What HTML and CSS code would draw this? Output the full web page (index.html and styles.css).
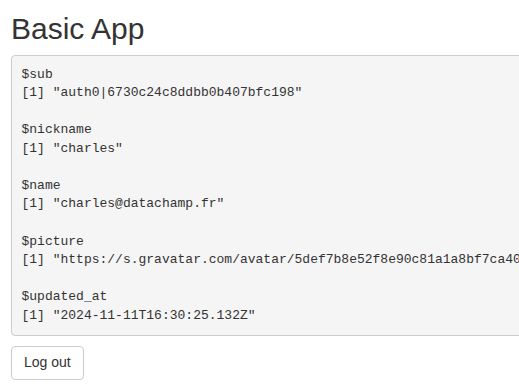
FILE: index.html
```html
<!DOCTYPE html>
<html>
<head>
<meta charset="utf-8">
<link rel="stylesheet" href="styles.css">
</head>
<body>
<div class="page">
  <h2 class="title">Basic App</h2>
  <pre class="output">$sub
[1] "auth0|6730c24c8ddbb0b407bfc198"

$nickname
[1] "charles"

$name
[1] "charles@datachamp.fr"

$picture
[1] "https://s.gravatar.com/avatar/5def7b8e52f8e90c81a1a8bf7ca40c07?s=480&amp;r=pg&amp;d=https%3A%2F%2Fcdn.auth0.com%2Favatars%2Fch.png"

$updated_at
[1] "2024-11-11T16:30:25.132Z"</pre>
  <button class="btn">Log out</button>
</div>
</body>
</html>
```

FILE: styles.css
```css
html, body {
  margin: 0;
  overflow: hidden;
}
body {
  font-family: "Liberation Sans", Arial, sans-serif;
  font-size: 14px;
  line-height: 1.42857;
  color: #333;
  background: #fff;
}
.page {
  padding: 0 11px;
  display: flex;
  flex-direction: column;
  align-items: flex-start;
}
.title {
  font-size: 30px;
  font-weight: 500;
  line-height: 1.1;
  margin: 12px 0 10px;
}
.output {
  box-sizing: border-box;
  width: max-content;
  min-width: 100%;
  margin: 0 0 10px;
  padding: 9.5px;
  font-family: "Liberation Mono", "Courier New", monospace;
  font-size: 13px;
  line-height: 1.42857;
  color: #333;
  background: #f5f5f5;
  border: 1px solid #ccc;
  border-radius: 4px;
  white-space: pre;
}
.btn {
  font-family: inherit;
  font-size: 14px;
  line-height: 1.42857;
  padding: 6px 12px;
  color: #333;
  background: #fff;
  border: 1px solid #ccc;
  border-radius: 4px;
}
```
